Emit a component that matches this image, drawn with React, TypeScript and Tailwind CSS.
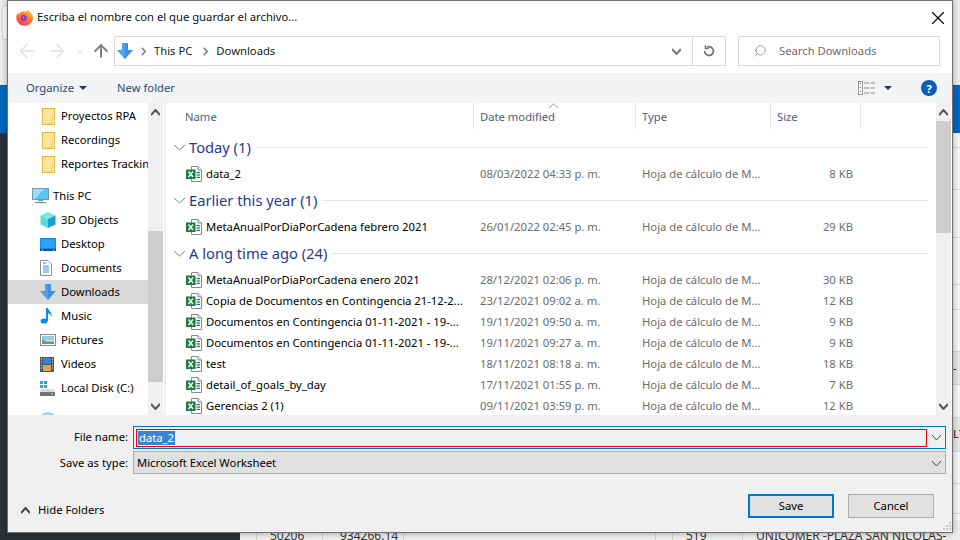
import React from "react";
import { ArrowLeft, ArrowRight, ArrowUp, Search, X } from "lucide-react";

const font = "[font-family:'Noto_Sans','Open_Sans',sans-serif]";

function Chev({ w = 9, h = 5, sw = 1, color = "#444", up = false, className = "" }: { w?: number; h?: number; sw?: number; color?: string; up?: boolean; className?: string }) {
  return (
    <svg width={w} height={h + 2} viewBox={`0 0 ${w} ${h + 2}`} className={`shrink-0 ${className}`}>
      <path d={up ? `M0 ${h + 1}L${w / 2} 1L${w} ${h + 1}` : `M0 1L${w / 2} ${h + 1}L${w} 1`} fill="none" stroke={color} strokeWidth={sw} />
    </svg>
  );
}

function Crumb({ className = "" }: { className?: string }) {
  return (
    <svg width="5" height="9" viewBox="0 0 5 9" className={`shrink-0 ${className}`}>
      <path d="M0.8 0.8L4.2 4.5L0.8 8.2" fill="none" stroke="#7a7a7a" strokeWidth="1.5" />
    </svg>
  );
}

function Firefox() {
  return (
    <svg width="17" height="17" viewBox="0 0 17 17" className="shrink-0">
      <defs>
        <linearGradient id="ff" x1="0.8" y1="0" x2="0.2" y2="1">
          <stop offset="0" stopColor="#ffc93a" />
          <stop offset="0.45" stopColor="#ff7a2b" />
          <stop offset="1" stopColor="#f5346a" />
        </linearGradient>
      </defs>
      <path d="M12 0.3c0.3 2 2.7 2.8 3.9 4.8 0.9 1.6 1.2 3.2 1 4.6-0.5 4-3.9 7-8.2 7-4.4 0-8.4-3.5-8.4-8 0-1.8 0.6-3.4 1.5-4.7 0.1 0.9 0.4 1.4 0.9 1.8C3.5 3.4 6.5 1.8 8.5 2.4 10 2.8 11.8 2.4 12 0.3z" fill="url(#ff)" />
      <circle cx="7.8" cy="8.8" r="2.9" fill="#6f35c4" />
      <circle cx="7.4" cy="8.6" r="1.4" fill="#b06ae6" />
    </svg>
  );
}

function Folder() {
  return (
    <svg width="13" height="17" viewBox="0 0 13 17" className="shrink-0">
      <rect x="0.5" y="0.5" width="12" height="16" fill="#fce59a" stroke="#e2b843" />
      <rect x="10" y="10" width="2.5" height="6.5" fill="#fff1c0" stroke="#e2b843" strokeWidth="0.7" />
    </svg>
  );
}

function Excel() {
  return (
    <svg width="16" height="16" viewBox="0 0 16 16" className="shrink-0">
      <path d="M5.5 0.5H12L15.5 4V15.5H5.5Z" fill="#fff" stroke="#8a8a8a" />
      <path d="M12 0.5V4H15.5" fill="#eee" stroke="#8a8a8a" />
      <rect x="10.5" y="6" width="3.5" height="1.2" fill="#1e7b45" />
      <rect x="10.5" y="8.4" width="3.5" height="1.2" fill="#1e7b45" />
      <rect x="10.5" y="10.8" width="3.5" height="1.2" fill="#1e7b45" />
      <rect x="0" y="3.5" width="9.5" height="9.5" fill="#1e7b45" />
      <path d="M2.5 5.5L7 11M7 5.5L2.5 11" stroke="#fff" strokeWidth="1.4" />
    </svg>
  );
}

function DownArrow() {
  return (
    <svg width="16" height="16" viewBox="0 0 16 16" className="shrink-0">
      <path d="M5 0H11V7H16L8 16L0 7H5Z" fill="#3d8fe0" />
      <path d="M5 0H8V16L0 7H5Z" fill="#4ba3f0" />
    </svg>
  );
}

function Pc() {
  return (
    <svg width="17" height="16" viewBox="0 0 17 16" className="shrink-0">
      <rect x="0.5" y="0.5" width="16" height="11" fill="#55c6f5" stroke="#7a98ab" />
      <path d="M1 1H12L3 11H1Z" fill="#9adffa" />
      <rect x="6" y="12" width="5" height="1.5" fill="#97a8b3" />
      <rect x="3" y="14" width="11" height="1.2" fill="#7a98ab" />
    </svg>
  );
}

function Cube() {
  return (
    <svg width="16" height="16" viewBox="0 0 16 16" className="shrink-0">
      <path d="M8 0L15.5 3.5L8 7L0.5 3.5Z" fill="#7de6e6" />
      <path d="M0.5 3.5L8 7V16L0.5 12.5Z" fill="#5cd8dc" />
      <path d="M15.5 3.5V12.5L8 16V7Z" fill="#1c9fd0" />
    </svg>
  );
}

function Desktop() {
  return (
    <svg width="16" height="13" viewBox="0 0 16 13" className="shrink-0">
      <rect x="0" y="0" width="16" height="12" fill="#0f87e8" />
      <path d="M1 1H15V10H1Z" fill="#2ea0f2" />
      <rect x="0" y="11" width="16" height="2" fill="#0b4f8f" />
      <rect x="2" y="11.5" width="1" height="1" fill="#fff" />
      <rect x="13" y="11.5" width="1" height="1" fill="#fff" />
    </svg>
  );
}

function Doc() {
  return (
    <svg width="12" height="16" viewBox="0 0 12 16" className="shrink-0">
      <path d="M0.5 0.5H8L11.5 4V15.5H0.5Z" fill="#fff" stroke="#8f8f8f" />
      <path d="M3 3H6.5M3 6H9M3 8H9M3 10H9M3 12H9" stroke="#3b8ed8" strokeWidth="1" />
    </svg>
  );
}

function Music() {
  return (
    <svg width="13" height="16" viewBox="0 0 13 16" className="shrink-0">
      <ellipse cx="4" cy="13" rx="3.5" ry="2.6" fill="#0f8ae8" />
      <path d="M6 0H8C8.3 3 12.5 4 11.5 9C11 6.8 9.6 5.5 8 5.2V13H6Z" fill="#0f8ae8" />
    </svg>
  );
}

function Pictures() {
  return (
    <svg width="16" height="12" viewBox="0 0 16 12" className="shrink-0">
      <rect x="0.5" y="0.5" width="15" height="11" fill="#fff" stroke="#8a8a8a" />
      <rect x="2" y="2" width="12" height="4" fill="#9cc9ea" />
      <rect x="2" y="6" width="12" height="4" fill="#6d9a7e" />
      <rect x="5" y="6" width="9" height="1.5" fill="#d8dfe0" />
    </svg>
  );
}

function Videos() {
  return (
    <svg width="14" height="15" viewBox="0 0 14 15" className="shrink-0">
      <rect x="0" y="0" width="14" height="15" fill="#4a5566" />
      <rect x="3" y="1" width="8" height="6" fill="#3f7fd0" />
      <rect x="3" y="8" width="8" height="6" fill="#d9a84a" />
      <path d="M1 2H2M1 5H2M1 8H2M1 11H2M12 2H13M12 5H13M12 8H13M12 11H13" stroke="#fff" />
    </svg>
  );
}

function Disk() {
  return (
    <svg width="15" height="15" viewBox="0 0 15 15" className="shrink-0">
      <rect x="0" y="0" width="3" height="3" fill="#22a7f0" />
      <rect x="4" y="0" width="3" height="3" fill="#22a7f0" />
      <rect x="0" y="4" width="3" height="3" fill="#22a7f0" />
      <rect x="4" y="4" width="3" height="3" fill="#22a7f0" />
      <path d="M1 8H14L15 11H0Z" fill="#dcdcdc" />
      <rect x="0" y="11" width="15" height="4" fill="#6f7478" />
      <rect x="11" y="12" width="2" height="1.5" fill="#6fe06f" />
    </svg>
  );
}

function Globe() {
  return (
    <svg width="16" height="16" viewBox="0 0 16 16" className="shrink-0">
      <circle cx="8" cy="8" r="8" fill="#a9cfe8" />
      <path d="M4 3C7 1 9 4 7 6C5 7 3 6 4 3Z" fill="#e5eff5" />
    </svg>
  );
}

function ViewIcon() {
  return (
    <svg width="17" height="14" viewBox="0 0 17 14" className="shrink-0">
      <rect x="0.5" y="0.5" width="4" height="13" fill="#fff" stroke="#9a9a9a" />
      <rect x="2" y="2" width="1" height="1" fill="#777" />
      <rect x="2" y="6" width="1" height="1" fill="#777" />
      <rect x="2" y="10" width="1" height="1" fill="#d33" />
      <path d="M6 2H11M12.5 2H17M6 7H11M12.5 7H17M6 12H11M12.5 12H17" stroke="#8d8d8d" />
    </svg>
  );
}

function Refresh() {
  return (
    <svg width="12" height="12" viewBox="0 0 12 12" className="shrink-0">
      <path d="M4 2.2A4.4 4.4 0 1 1 1.6 6" fill="none" stroke="#757575" strokeWidth="1.8" />
      <path d="M2.4 0.2V3.4H5.8" fill="none" stroke="#757575" strokeWidth="1.5" />
    </svg>
  );
}

function Caret({ className = "" }: { className?: string }) {
  return <span className={`inline-block w-0 h-0 border-x-[4px] border-x-transparent border-t-[4px] border-t-[#1e395b] ${className}`} />;
}

function Scrollbar({ top, thumb, tail }: { top: number; thumb: number; tail: number }) {
  return (
    <div className="w-[15px] h-full shrink-0 bg-[#f0f0f0] flex flex-col">
      <div className="h-[18px] flex items-center justify-center"><Chev up sw={2} color="#555" /></div>
      <div style={{ height: top }} />
      <div className="bg-[#cdcdcd]" style={{ height: thumb }} />
      <div style={{ height: tail }} />
      <div className="h-[18px] flex items-center justify-center"><Chev sw={2} color="#555" /></div>
    </div>
  );
}

const side: [React.ReactNode, string, boolean?][] = [
  [<Cube />, "3D Objects"],
  [<Desktop />, "Desktop"],
  [<Doc />, "Documents"],
  [<DownArrow />, "Downloads", true],
  [<Music />, "Music"],
  [<Pictures />, "Pictures"],
  [<Videos />, "Videos"],
  [<Disk />, "Local Disk (C:)"],
];

function SideRow({ icon, label, active }: { icon: React.ReactNode; label: string; active?: boolean }) {
  return (
    <div className={`h-6 flex items-center pl-[32px] ${active ? "bg-[#d9d9d9]" : ""}`}>
      <div className="w-[21px] flex justify-start">{icon}</div>
      <span className="whitespace-nowrap">{label}</span>
    </div>
  );
}

type F = [string, string, string];

function Row({ f }: { f: F }) {
  return (
    <div className="h-[21px] flex items-center pt-[1px]">
      <div className="w-[313px] pl-[20px] flex items-center gap-[4px] shrink-0 whitespace-nowrap text-black">
        <Excel />
        <span>{f[0]}</span>
      </div>
      <div className="w-[162px] pl-[1px] shrink-0 text-[#6d6d6d] whitespace-nowrap">{f[1]}</div>
      <div className="w-[125px] pl-[1px] shrink-0 text-[#6d6d6d] whitespace-nowrap">Hoja de cálculo de M...</div>
      <div className="w-[87px] text-right shrink-0 text-[#6d6d6d] whitespace-nowrap">{f[2]}</div>
    </div>
  );
}

function Group({ title }: { title: string }) {
  return (
    <div className="h-8 flex items-center pl-[8px] pr-[8px]">
      <Chev w={11} h={5} color="#808080" />
      <span className="ml-[4px] text-[14.7px] text-[#1f3a93] whitespace-nowrap">{title}</span>
      <div className="flex-1 h-px bg-[#e5e5e5] ml-[5px]" />
    </div>
  );
}

const old: F[] = [
  ["MetaAnualPorDiaPorCadena enero 2021", "28/12/2021 02:06 p. m.", "30 KB"],
  ["Copia de Documentos en Contingencia 21-12-2...", "23/12/2021 09:02 a. m.", "12 KB"],
  ["Documentos en Contingencia 01-11-2021 - 19-...", "19/11/2021 09:50 a. m.", "9 KB"],
  ["Documentos en Contingencia 01-11-2021 - 19-...", "19/11/2021 09:27 a. m.", "9 KB"],
  ["test", "18/11/2021 08:18 a. m.", "18 KB"],
  ["detail_of_goals_by_day", "17/11/2021 01:55 p. m.", "7 KB"],
  ["Gerencias 2 (1)", "09/11/2021 03:59 p. m.", "12 KB"],
];

const strip: [number, string, string?][] = [
  [15, "#f6f6f6"],
  [42, "#f6f6f6"],
  [48, "#f6f6f6"],
  [47, "#f6f6f6"],
  [25, "#f6f6f6"],
  [42, "#f6f6f6"],
  [33, "#e6e6e6", "-"],
  [33, "#f6f6f6"],
  [34, "#e6e6e6", "LT"],
  [32, "#f6f6f6"],
  [30, "#f6f6f6"],
  [26, "#f6f6f6"],
];

export default function App() {
  return (
    <div className={`relative w-[960px] h-[540px] overflow-hidden bg-[#2b3035] text-[11.25px] ${font}`}>
      {/* page behind the dialog */}
      <div className="h-[85px] bg-[#ececec] pt-[5px]">
        <div className="ml-[2px] w-[8px] h-[35px] rounded-[3px] border border-[#d0d0d0] bg-white" />
      </div>
      <div className="h-[48px] bg-[#0067c0]" />
      <div className="flex justify-end h-[407px]">
        <div className="w-[8px] flex flex-col overflow-hidden whitespace-nowrap text-[#222]">
          {strip.map(([h, bg, t], i) => (
            <div key={i} className="border-b border-[#d4d4d4] pl-[1px] flex items-center shrink-0" style={{ height: h, background: bg }}>{t}</div>
          ))}
        </div>
      </div>
      <div className="absolute left-[240px] right-0 top-[520px] h-[20px] bg-[#ececec] flex text-[#333] text-[12px]">
        <div className="w-[17px] h-full border-r border-[#d0d0d0]" />
        <div className="w-[66px] h-full border-r border-[#d0d0d0] pl-[13px] pt-[7px]">50206</div>
        <div className="w-[81px] h-full border-r border-[#d0d0d0] pl-[17px] pt-[7px]">934266.14</div>
        <div className="w-[252px] h-full border-r border-[#d0d0d0]" />
        <div className="w-[17px] h-full border-r border-[#d0d0d0]" />
        <div className="w-[70px] h-full border-r border-[#d0d0d0] pl-[13px] pt-[7px]">519</div>
        <div className="flex-1 h-full pl-[13px] pt-[7px] whitespace-nowrap overflow-hidden">UNICOMER -PLAZA SAN NICOLAS-</div>
      </div>

      {/* dialog */}
      <div className="absolute left-[7px] top-0 w-[946px] h-[533px] border border-[#707070] bg-white flex flex-col shadow-[0_0_6px_rgba(0,0,0,0.35)]">
        {/* title */}
        <div className="h-8 shrink-0 flex items-center pl-[8px] pr-[3px] pt-[1px]">
          <Firefox />
          <span className="ml-[4px] text-[#111] whitespace-nowrap">Escriba el nombre con el que guardar el archivo...</span>
          <X size={22} strokeWidth={1.2} className="ml-auto text-black" />
        </div>
        {/* nav */}
        <div className="h-10 shrink-0 flex items-center pb-[4px]">
          <ArrowLeft size={22} strokeWidth={1.6} className="ml-[8px] text-[#e0e0e0]" />
          <ArrowRight size={22} strokeWidth={1.6} className="ml-[8px] text-[#e0e0e0]" />
          <Chev w={6} h={3} sw={1.2} color="#e0e0e0" className="ml-[9px]" />
          <ArrowUp size={20} strokeWidth={2.4} className="ml-[8px] mr-[1px] text-[#808080]" />
          <div className="ml-[2px] w-[612px] h-[30px] border border-[#d9d9d9] flex items-center text-[#1a1a1a]">
            <div className="ml-[2px]"><DownArrow /></div>
            <Crumb className="ml-[8px]" />
            <span className="ml-[8px]">This PC</span>
            <Crumb className="ml-[11px]" />
            <span className="ml-[8px]">Downloads</span>
            <Chev sw={2} color="#777" className="ml-auto mr-[11px]" />
            <div className="w-[33px] h-full border-l border-[#d9d9d9] flex items-center justify-center">
              <Refresh />
            </div>
          </div>
          <div className="ml-[12px] w-[202px] h-[30px] border border-[#d9d9d9] flex items-center">
            <Search size={14} strokeWidth={1.2} className="ml-[14px] text-[#777] -scale-x-100" />
            <span className="ml-[12px] text-[#6d6d6d]">Search Downloads</span>
          </div>
        </div>
        {/* toolbar */}
        <div className="h-[30px] shrink-0 bg-[#f3f4f6] flex items-center text-[#2b4a6f]">
          <span className="ml-[18px]">Organize</span>
          <Caret className="ml-[5px]" />
          <span className="ml-[30px]">New folder</span>
          <div className="ml-auto flex items-center">
            <ViewIcon />
            <Caret className="ml-[9px]" />
            <div className="ml-[29px] mr-[15px] w-4 h-4 rounded-full bg-[#0a5fb4] text-white font-bold flex items-center justify-center text-[11px] leading-none">?</div>
          </div>
        </div>
        {/* main */}
        <div className="h-[312px] shrink-0 flex overflow-hidden">
          <div className="w-[140px] shrink-0 overflow-hidden pt-[1px] text-black">
            <div className="h-6 flex items-center pl-[34px]"><Folder /><span className="ml-[6px] whitespace-nowrap">Proyectos RPA</span></div>
            <div className="h-6 flex items-center pl-[34px]"><Folder /><span className="ml-[6px] whitespace-nowrap">Recordings</span></div>
            <div className="h-6 flex items-center pl-[34px]"><Folder /><span className="ml-[6px] whitespace-nowrap">Reportes Tracking</span></div>
            <div className="h-2" />
            <div className="h-6 flex items-center pl-[24px]"><Pc /><span className="ml-[4px]">This PC</span></div>
            {side.map(([i, l, a]) => <SideRow key={l} icon={i} label={l} active={a} />)}
            <div className="h-2" />
            <div className="h-6 flex items-center pl-[32px]"><Globe /></div>
          </div>
          <Scrollbar top={110} thumb={151} tail={15} />
          <div className="w-[3px] shrink-0 bg-[#f0f0f0] border-l border-white" />
          <div className="flex-1 min-w-0 flex flex-col">
            <div className="h-[26px] shrink-0 flex text-[#4c607a]">
              <div className="w-[308px] pl-[19px] pt-[6px] border-r border-[#e5e5e5]">Name</div>
              <div className="relative w-[162px] pl-[6px] pt-[6px] border-r border-[#e5e5e5]">
                Date modified
                <Chev up w={9} h={4} color="#999" className="absolute left-[75px] top-0" />
              </div>
              <div className="w-[135px] pl-[6px] pt-[6px] border-r border-[#e5e5e5]">Type</div>
              <div className="w-[90px] pl-[6px] pt-[6px] border-r border-[#e5e5e5]">Size</div>
            </div>
            <div className="pt-[2px] flex-1 overflow-hidden">
              <Group title="Today (1)" />
              <Row f={["data_2", "08/03/2022 04:33 p. m.", "8 KB"]} />
              <Group title="Earlier this year (1)" />
              <Row f={["MetaAnualPorDiaPorCadena febrero 2021", "26/01/2022 02:45 p. m.", "29 KB"]} />
              <Group title="A long time ago (24)" />
              {old.map((f, i) => <Row key={i} f={f} />)}
            </div>
          </div>
          <Scrollbar top={0} thumb={112} tail={164} />
          <div className="w-px bg-white" />
        </div>
        {/* bottom */}
        <div className="relative flex-1 bg-[#f0f0f0] pt-[11px] text-black">
          <div className="h-[23px] flex items-center">
            <div className="w-[125px] text-right pr-[5px]">File name:</div>
            <div className="w-[813px] h-full border border-[#0078d7] flex items-center pl-[2px]">
              <div className="w-[791px] h-[18px] border border-[#f00000] flex items-center pl-[1px]">
                <span className="bg-[#3a84d6] text-white leading-[14px] px-[1px]">data_2</span>
              </div>
              <Chev className="ml-auto mr-[4px]" />
            </div>
          </div>
          <div className="h-[23px] mt-[2px] flex items-center">
            <div className="w-[125px] text-right pr-[5px] pt-[1px]">Save as type:</div>
            <div className="w-[813px] h-full border border-[#adadad] bg-[#e1e1e1] flex items-center pl-[3px] pt-[1px]">
              <span>Microsoft Excel Worksheet</span>
              <Chev className="ml-auto mr-[4px]" />
            </div>
          </div>
          <div className="flex items-center justify-between mt-[20px]">
            <div className="flex items-center ml-[13px] mt-[8px]">
              <Chev up sw={2} color="#444" />
              <span className="ml-[8px]">Hide Folders</span>
            </div>
            <div className="flex mr-[18px] gap-[14px]">
              <div className="w-[86px] h-6 border-2 border-[#0078d7] bg-[#e1e1e1] flex items-center justify-center">Save</div>
              <div className="w-[86px] h-6 border border-[#adadad] bg-[#e1e1e1] flex items-center justify-center">Cancel</div>
            </div>
          </div>
          <svg width="11" height="11" viewBox="0 0 11 11" className="absolute right-0 bottom-0">
            <path d="M8 1h2v2H8zM5 4h2v2H5zM8 4h2v2H8zM2 7h2v2H2zM5 7h2v2H5zM8 7h2v2H8z" fill="#c8c8c8" />
          </svg>
        </div>
      </div>
    </div>
  );
}
